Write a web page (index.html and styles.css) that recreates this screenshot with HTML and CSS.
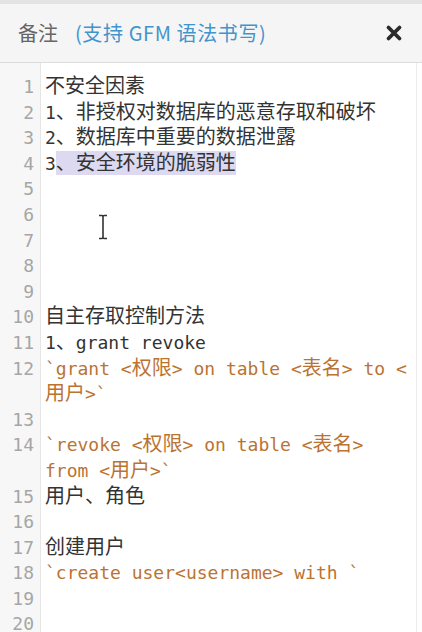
FILE: index.html
```html
<!DOCTYPE html>
<html lang="zh-CN">
<head>
<meta charset="utf-8">
<title>备注</title>
<link rel="stylesheet" href="styles.css">
</head>
<body>
<div class="panel">
  <div class="header">
    <div class="title">备注<span class="hint">(支持 GFM 语法书写)</span></div>
    <svg class="close" width="18" height="18" viewBox="0 0 18 18" aria-hidden="true">
      <path d="M3.5 3.5 L14.5 14.5 M14.5 3.5 L3.5 14.5" stroke="#2b2b2b" stroke-width="3.8" stroke-linecap="round"/>
    </svg>
  </div>
  <div class="editor">
    <div class="num">1</div><div class="line"><span class="c">不安全因素</span></div>
    <div class="num">2</div><div class="line">1<span class="c">、非授权对数据库的恶意存取和破坏</span></div>
    <div class="num">3</div><div class="line">2<span class="c">、数据库中重要的数据泄露</span></div>
    <div class="num">4</div><div class="line">3<span class="c sel">、安全环境的脆弱性</span></div>
    <div class="num">5</div><div class="line"></div>
    <div class="num">6</div><div class="line"></div>
    <div class="num">7</div><div class="line"></div>
    <div class="num">8</div><div class="line"></div>
    <div class="num">9</div><div class="line"></div>
    <div class="num">10</div><div class="line"><span class="c">自主存取控制方法</span></div>
    <div class="num">11</div><div class="line">1<span class="c">、</span>grant revoke</div>
    <div class="num">12</div><div class="line code">`grant &lt;<span class="c">权限</span>&gt; on table &lt;<span class="c">表名</span>&gt; to &lt;<br><span class="c">用户</span>&gt;`</div>
    <div class="num">13</div><div class="line"></div>
    <div class="num">14</div><div class="line code">`revoke &lt;<span class="c">权限</span>&gt; on table &lt;<span class="c">表名</span>&gt;<br>from &lt;<span class="c">用户</span>&gt;`</div>
    <div class="num">15</div><div class="line"><span class="c">用户、角色</span></div>
    <div class="num">16</div><div class="line"></div>
    <div class="num">17</div><div class="line"><span class="c">创建用户</span></div>
    <div class="num">18</div><div class="line code">`create user&lt;username&gt; with `</div>
    <div class="num">19</div><div class="line"></div>
    <div class="num">20</div><div class="line"></div>
    <svg class="ibeam" width="12" height="26" viewBox="0 0 12 26" aria-hidden="true">
      <path d="M2 1.5 H5 Q6 1.5 6 3 V23 Q6 24.5 5 24.5 H2 M10 1.5 H7 Q6 1.5 6 3 M6 23 Q6 24.5 7 24.5 H10" fill="none" stroke="#333" stroke-width="1.6"/>
    </svg>
  </div>
</div>
</body>
</html>
```

FILE: styles.css
```css
html, body {
  margin: 0;
  padding: 0;
  background: #fff;
}

.panel {
  width: 422px;
  height: 632px;
  overflow: hidden;
  border-top: 4px solid #e3e3e3;
  box-sizing: border-box;
}

.header {
  height: 59px;
  box-sizing: border-box;
  background: #f5f5f5;
  border-bottom: 1px solid #dcdcdc;
  display: flex;
  align-items: center;
  justify-content: space-between;
  padding: 0 19px 0 18px;
}

.title {
  font-family: "Noto Sans CJK SC", "Noto Sans", sans-serif;
  font-size: 20px;
  color: #666;
  line-height: 26px;
}

.hint {
  color: #4294cd;
  margin-left: 17px;
  letter-spacing: 0.6px;
}

.close {
  display: block;
}

.editor {
  position: relative;
  width: 417px;
  height: 580px;
  box-sizing: border-box;
  border-right: 1px solid #ececec;
  padding-top: 11px;
  display: grid;
  grid-template-columns: 41px 1fr;
  align-content: start;
  background: linear-gradient(to right, #f7f7f7 0, #f7f7f7 40px, #e6e6e6 40px, #e6e6e6 41px, #fff 41px);
  font-family: "DejaVu Sans Mono", "Noto Sans CJK SC", monospace;
  font-size: 18px;
  line-height: 25.6px;
  color: #333;
}

.num {
  text-align: right;
  padding-right: 7px;
  color: #a6a6a6;
}

.line {
  padding-left: 4px;
  min-height: 25.6px;
  white-space: pre;
}

.c {
  font-family: "Noto Sans CJK SC", sans-serif;
  font-size: 20px;
  line-height: 20px;
}

.sel {
  background: linear-gradient(to bottom, transparent 0, transparent 4px, #dcd9f1 4px, #dcd9f1 28px, transparent 28px);
}

.code {
  color: #bb7332;
}

.ibeam {
  position: absolute;
  left: 97px;
  top: 151px;
}
```
